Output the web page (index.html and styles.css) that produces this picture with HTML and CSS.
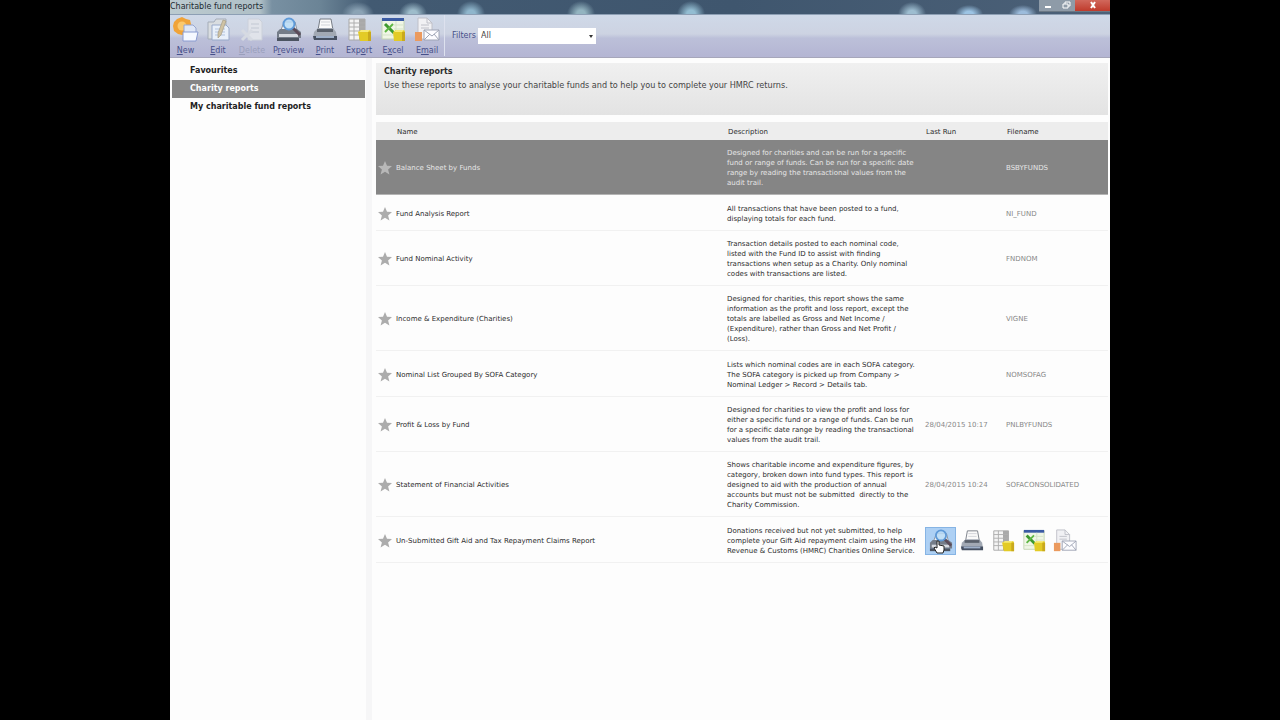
FILE: index.html
```html
<!DOCTYPE html>
<html lang="en">
<head>
<meta charset="utf-8">
<title>Charitable fund reports</title>
<link rel="stylesheet" href="styles.css">
</head>
<body>
<svg class="sprite" aria-hidden="true">
  <symbol id="i-new" viewBox="0 0 26 26">
    <path d="M9 0l4 2 4 1 1 4 1 3-2 4-3 3-5 1-4-1-4-3-1-5 1-4 3-3z" fill="#f0a338"/>
    <circle cx="9" cy="9" r="4.500" fill="#fbc96e"/>
    <path d="M11 8h9l3 3v10H11z" fill="#dfe7f6" stroke="#97a6d0"/>
    <path d="M10 15h15l-2 9H10z" fill="#f5f8ff" stroke="#8a9bd0"/>
  </symbol>
  <symbol id="i-edit" viewBox="0 0 26 26">
    <path d="M3 5h6l2-3h10v20H3z" fill="#d9dde0" stroke="#a5adb8"/>
    <path d="M7 8h14l3 3v12H7z" fill="#e8f0fa" stroke="#98a9c9"/>
    <path d="M10 12h10M10 15h10M10 18h10" stroke="#b2c3dd"/>
    <path d="M18 3l3 1-5 14-3 3 0-5z" fill="#cfc3a4" stroke="#a0967e" stroke-width=".6"/>
  </symbol>
  <symbol id="i-delete" viewBox="0 0 26 26">
    <path d="M9 2h11l3 3v18H9z" fill="#e0e3ea" stroke="#cbd0da"/>
    <path d="M12 7h8M12 11h8M12 15h8" stroke="#c2c8d3"/>
    <path d="M3 13l10 10M13 13L3 23" stroke="#d6dae2" stroke-width="3"/>
  </symbol>
  <symbol id="i-preview" viewBox="0 0 26 26">
    <path d="M5 13l3-8h11l2 8z" fill="#f2f4f7" stroke="#8a919c"/>
    <path d="M1 15l3-3h17l4 3v6H1z" fill="#747c88"/>
    <path d="M3 17h19v3H3z" fill="#d6dae1"/>
    <path d="M1 21h22v3H1z" fill="#4c5461"/>
    <path d="M17 11l7 7" stroke="#5b4b59" stroke-width="3"/>
    <circle cx="13" cy="7" r="5.500" fill="#b8dbf6" fill-opacity=".85" stroke="#5f9ad8" stroke-width="2"/>
  </symbol>
  <symbol id="i-print" viewBox="0 0 26 26">
    <path d="M6 13L8 2h11l2 11z" fill="#fafafa" stroke="#777d86"/>
    <path d="M9 5h9M9 8h9" stroke="#d0d3d8"/>
    <path d="M2 15l4-4h15l3 4 1 7H1z" fill="#a2a9b4"/>
    <path d="M5 12h16v3H5z" fill="#59606b"/>
    <path d="M1 19h24v4H2z" fill="#465062"/>
    <path d="M4 19h18v2H4z" fill="#9fb0c9"/>
  </symbol>
  <symbol id="i-export" viewBox="0 0 26 26">
    <path d="M3 2h16v21H3z" fill="#f4f4f4" stroke="#a8a8a8"/>
    <path d="M13 2h6v21h-6z" fill="#a9a9a9"/>
    <path d="M3 6h16M3 10h16M3 14h16M3 18h16M8 2v21" stroke="#aeaeae"/>
    <path d="M12 15l3-2h9l1 2v9H14z" fill="#e3cb26"/>
    <path d="M13 15h9l2-2h-9z" fill="#f6ea78"/>
    <path d="M22 15h3v9h-3z" fill="#c9a91d"/>
  </symbol>
  <symbol id="i-excel" viewBox="0 0 26 26">
    <path d="M2 2h22v20H2z" fill="#f0f6e6" stroke="#c3d4b4"/>
    <path d="M2 1h22v3H2z" fill="#3b5ba4"/>
    <path d="M14 8h9M14 12h9M2 18h12M16 4v12" stroke="#d5e3c8"/>
    <path d="M5 7l9 9" stroke="#3e9a2e" stroke-width="3"/>
    <path d="M13 7l-8 8" stroke="#5eb744" stroke-width="2"/>
    <path d="M13 15l3-2h8l1 2v9H14z" fill="#e3cb26"/>
    <path d="M14 15h8l2-2h-8z" fill="#f6ea78"/>
    <path d="M22 15h3v9h-3z" fill="#c9a91d"/>
  </symbol>
  <symbol id="i-email" viewBox="0 0 26 26">
    <path d="M4 1h9l5 5v16H4z" fill="#f1f1f4" stroke="#bfc0c8"/>
    <path d="M13 1v5h5M7 8h8M7 11h8" fill="none" stroke="#bfc0c8"/>
    <path d="M1 15h7v9H1z" fill="#eb9a5e"/>
    <path d="M10 13h15v10H10z" fill="#fdfdff" stroke="#9fa5b5"/>
    <path d="M10 13l8 6 7-6M10 23l6-6M25 23l-5-6" fill="none" stroke="#9fa5b5"/>
  </symbol>
  <symbol id="i-star" viewBox="0 0 14 14">
    <path d="M7 0l2 4.700 5 .4-3.900 3.300 1.300 5.100L7 10.800l-4.400 2.700 1.300-5.100L0 5.100l5-.4z" fill="currentColor"/>
  </symbol>
  <symbol id="i-hand" viewBox="0 0 12 14">
    <path d="M4 13L1 8l1-1 2 1V1h2v4l5 1v4l-1 3z" fill="#fff" stroke="#222"/>
  </symbol>
</svg>

<div class="window">
  <header class="titlebar">
    <h1 class="title">Charitable fund reports</h1>
    <div class="controls">
      <button class="control" aria-label="Minimise"><svg viewBox="0 0 12 8"><path d="M3 5h6v2H3z" fill="#fff"/></svg></button>
      <button class="control" aria-label="Restore"><svg viewBox="0 0 12 8"><path d="M3 3h5v4H3zM5 3V1h5v4H8" fill="none" stroke="#fff"/></svg></button>
      <button class="control close" aria-label="Close"><svg viewBox="0 0 12 8"><path d="M4 1l4 6M8 1L4 7" stroke="#fff" stroke-width="2"/></svg></button>
    </div>
  </header>

  <div class="toolbar">
    <button class="tool first"><svg><use href="#i-new"/></svg><span><u>N</u>ew</span></button>
    <button class="tool"><svg><use href="#i-edit"/></svg><span><u>E</u>dit</span></button>
    <button class="tool" disabled><svg><use href="#i-delete"/></svg><span><u>D</u>elete</span></button>
    <button class="tool wide"><svg><use href="#i-preview"/></svg><span>P<u>r</u>eview</span></button>
    <button class="tool"><svg><use href="#i-print"/></svg><span><u>P</u>rint</span></button>
    <button class="tool"><svg><use href="#i-export"/></svg><span>Exp<u>o</u>rt</span></button>
    <button class="tool"><svg><use href="#i-excel"/></svg><span>E<u>x</u>cel</span></button>
    <button class="tool"><svg><use href="#i-email"/></svg><span>E<u>m</u>ail</span></button>
    <div class="filter">
      <label for="filter">Filters</label>
      <div class="select-box"><select id="filter"><option>All</option></select></div>
    </div>
  </div>

  <div class="content">
    <nav class="sidebar">
      <a class="nav-item" href="#favourites">Favourites</a>
      <a class="nav-item selected" href="#charity">Charity reports</a>
      <a class="nav-item" href="#mine">My charitable fund reports</a>
    </nav>
    <main class="main">
      <section class="intro">
        <h2>Charity reports</h2>
        <p>Use these reports to analyse your charitable funds and to help you to complete your HMRC returns.</p>
      </section>
      <table class="reports">
        <colgroup><col class="c-star"><col><col class="c-desc"><col class="c-run"><col class="c-file"></colgroup>
        <thead>
          <tr><th></th><th>Name</th><th>Description</th><th>Last Run</th><th>Filename</th></tr>
        </thead>
        <tbody>
          <tr class="selected"><td><svg class="star"><use href="#i-star"/></svg></td><td>Balance Sheet by Funds</td><td>Designed for charities and can be run for a specific<br>fund or range of funds. Can be run for a specific date<br>range by reading the transactional values from the<br>audit trail.</td><td></td><td class="meta">BSBYFUNDS</td></tr>
          <tr><td><svg class="star"><use href="#i-star"/></svg></td><td>Fund Analysis Report</td><td>All transactions that have been posted to a fund,<br>displaying totals for each fund.</td><td></td><td class="meta">NI_FUND</td></tr>
          <tr><td><svg class="star"><use href="#i-star"/></svg></td><td>Fund Nominal Activity</td><td>Transaction details posted to each nominal code,<br>listed with the Fund ID to assist with finding<br>transactions when setup as a Charity. Only nominal<br>codes with transactions are listed.</td><td></td><td class="meta">FNDNOM</td></tr>
          <tr><td><svg class="star"><use href="#i-star"/></svg></td><td>Income &amp; Expenditure (Charities)</td><td>Designed for charities, this report shows the same<br>information as the profit and loss report, except the<br>totals are labelled as Gross and Net Income /<br>(Expenditure), rather than Gross and Net Profit /<br>(Loss).</td><td></td><td class="meta">VIGNE</td></tr>
          <tr class="medium"><td><svg class="star"><use href="#i-star"/></svg></td><td>Nominal List Grouped By SOFA Category</td><td>Lists which nominal codes are in each SOFA category.<br>The SOFA category is picked up from Company &gt;<br>Nominal Ledger &gt; Record &gt; Details tab.</td><td></td><td class="meta">NOMSOFAG</td></tr>
          <tr><td><svg class="star"><use href="#i-star"/></svg></td><td>Profit &amp; Loss by Fund</td><td>Designed for charities to view the profit and loss for<br>either a specific fund or a range of funds. Can be run<br>for a specific date range by reading the transactional<br>values from the audit trail.</td><td class="meta">28/04/2015 10:17</td><td class="meta">PNLBYFUNDS</td></tr>
          <tr><td><svg class="star"><use href="#i-star"/></svg></td><td>Statement of Financial Activities</td><td>Shows charitable income and expenditure figures, by<br>category, broken down into fund types. This report is<br>designed to aid with the production of annual<br>accounts but must not be submitted &nbsp;directly to the<br>Charity Commission.</td><td class="meta">28/04/2015 10:24</td><td class="meta">SOFACONSOLIDATED</td></tr>
          <tr class="medium"><td><svg class="star"><use href="#i-star"/></svg></td><td>Un-Submitted Gift Aid and Tax Repayment Claims Report</td><td>Donations received but not yet submitted, to help<br>complete your Gift Aid repayment claim using the HM<br>Revenue &amp; Customs (HMRC) Charities Online Service.</td>
            <td colspan="2" class="action-cell">
              <div class="actions">
                <button class="action hover" aria-label="Preview"><svg><use href="#i-preview"/></svg><svg class="pointer"><use href="#i-hand"/></svg></button>
                <button class="action" aria-label="Print"><svg><use href="#i-print"/></svg></button>
                <button class="action" aria-label="Export"><svg><use href="#i-export"/></svg></button>
                <button class="action" aria-label="Excel"><svg><use href="#i-excel"/></svg></button>
                <button class="action" aria-label="Email"><svg><use href="#i-email"/></svg></button>
              </div>
            </td></tr>
        </tbody>
      </table>
    </main>
  </div>
</div>
</body>
</html>
```
FILE: styles.css
```css
* { box-sizing: border-box; }
body {
  margin: 0;
  padding: 0 170px;
  background: #000;
  color: #2c2c2c;
  font-family: "DejaVu Sans", sans-serif;
  font-size: 8px;
}
h1, h2, p { margin: 0; font-size: inherit; font-weight: normal; }
button { margin: 0; padding: 0; border: 0; background: none; font: inherit; color: inherit; }
.sprite { position: absolute; width: 0; height: 0; }

.window { display: flex; flex-direction: column; min-height: 100vh; background: #fdfdfd; }

.titlebar {
  display: flex;
  justify-content: space-between;
  height: 15px;
  border-bottom: 1px solid #8d9fb4;
  background:
    radial-gradient(ellipse 16px 12px at 188px 14px, #8ba3b5 30%, transparent),
    radial-gradient(ellipse 14px 12px at 243px 14px, #9dbccb 30%, transparent),
    radial-gradient(ellipse 14px 13px at 301px 14px, #8fb6cc 30%, transparent),
    radial-gradient(ellipse 14px 13px at 411px 14px, #93b4c0 30%, transparent),
    radial-gradient(ellipse 14px 13px at 521px 14px, #93bdd2 30%, transparent),
    radial-gradient(ellipse 14px 12px at 742px 14px, #9dbdd0 30%, transparent),
    radial-gradient(ellipse 14px 9px at 799px 14px, #9cc4e4 30%, transparent),
    radial-gradient(ellipse 14px 9px at 853px 14px, #9cbcdc 30%, transparent),
    linear-gradient(90deg, #bccbd0, #afbfc6 90px, #7890a2 102px, #6b8496 150px, #425a72 200px, #3f566e 60%, #4c6178);
}
.title { line-height: 14px; white-space: nowrap; color: #1c2a30; }
.controls { display: flex; align-items: flex-start; }
.control { display: flex; justify-content: center; width: 18px; height: 12px; background: #8e9ba8; border-bottom: 1px solid #6a7885; }
.control svg { width: 12px; height: 8px; margin-top: 1px; }
.control.close { width: 35px; background: linear-gradient(#d1685c, #bf3b2c); }

.toolbar {
  display: flex;
  height: 43px;
  border-bottom: 1px solid #a6a6ba;
  background: linear-gradient(#cfd9e8, #cdd3e2 45%, #bcc0d9 55%, #b4b5d3);
  color: #47508a;
}
.tool { display: flex; flex-direction: column; align-items: center; width: 34px; padding-top: 2px; line-height: 10px; }
.tool svg { width: 26px; height: 26px; margin-bottom: 3px; }
.tool.first { width: 31px; }
.tool.wide { width: 39px; }
.tool:disabled { color: #9a9fbc; }
.filter {
  display: flex;
  align-items: center;
  gap: 2px;
  height: 41px;
  padding-left: 7px;
  border-left: 1px solid #dde1ee;
}
.select-box { position: relative; }
.select-box::after {
  content: "";
  position: absolute;
  right: 3px;
  top: 7px;
  border: 2px solid transparent;
  border-top: 3px solid #333;
}
select {
  display: block;
  width: 118px;
  height: 16px;
  padding: 0 3px;
  border: 0;
  border-radius: 0;
  appearance: none;
  background: #fff;
  color: #444;
  font: inherit;
}

.content { display: flex; flex: 1; }
.sidebar { flex: none; width: 196px; padding: 4px 1px 0 2px; }
.nav-item { display: block; padding-left: 18px; line-height: 18px; font-weight: bold; color: #222; text-decoration: none; }
.nav-item.selected { background: #858585; color: #fff; }
.main { flex: 1; padding: 5px 2px 0 4px; border-left: 6px solid #f6f6f7; }
.intro { height: 52px; padding: 3px 8px; background: linear-gradient(#f0f0f0, #e3e3e3); }
.intro h2 { font-weight: bold; line-height: 12px; }
.intro p { font-family: "DejaVu Sans Condensed", "DejaVu Sans", sans-serif; font-size: 9px; line-height: 14px; color: #444; }

.reports { width: 100%; margin-top: 7px; table-layout: fixed; border-collapse: collapse; font-size: 7px; line-height: 10px; }
.c-star { width: 20px; }
.c-desc { width: 198px; }
.c-run { width: 81px; }
.c-file { width: 102px; }
th { height: 18px; padding: 2px 1px 0; background: #ededed; text-align: left; font-weight: normal; }
td { padding: 8px 0 6px; height: 36px; border-bottom: 1px solid #f1f1f1; white-space: nowrap; vertical-align: middle; }
.star { display: block; width: 14px; height: 14px; margin-left: 2px; color: #acacac; }
.meta { color: #888; }
.selected td { background: #858585; color: #e6e6e6; border-bottom-color: #b4b4b4; }
.selected .star { color: #b8b8b8; }
.medium td { height: 46px; }
.medium .action-cell { padding: 2px 0 0; }
.actions { display: flex; }
.action { display: flex; align-items: center; justify-content: center; position: relative; width: 31px; height: 28px; }
.action svg { width: 24px; height: 24px; }
.action.hover { background: #add0f4; border: 1px solid #86b4e4; }
.action .pointer { position: absolute; left: 7px; top: 12px; width: 12px; height: 14px; }
```
